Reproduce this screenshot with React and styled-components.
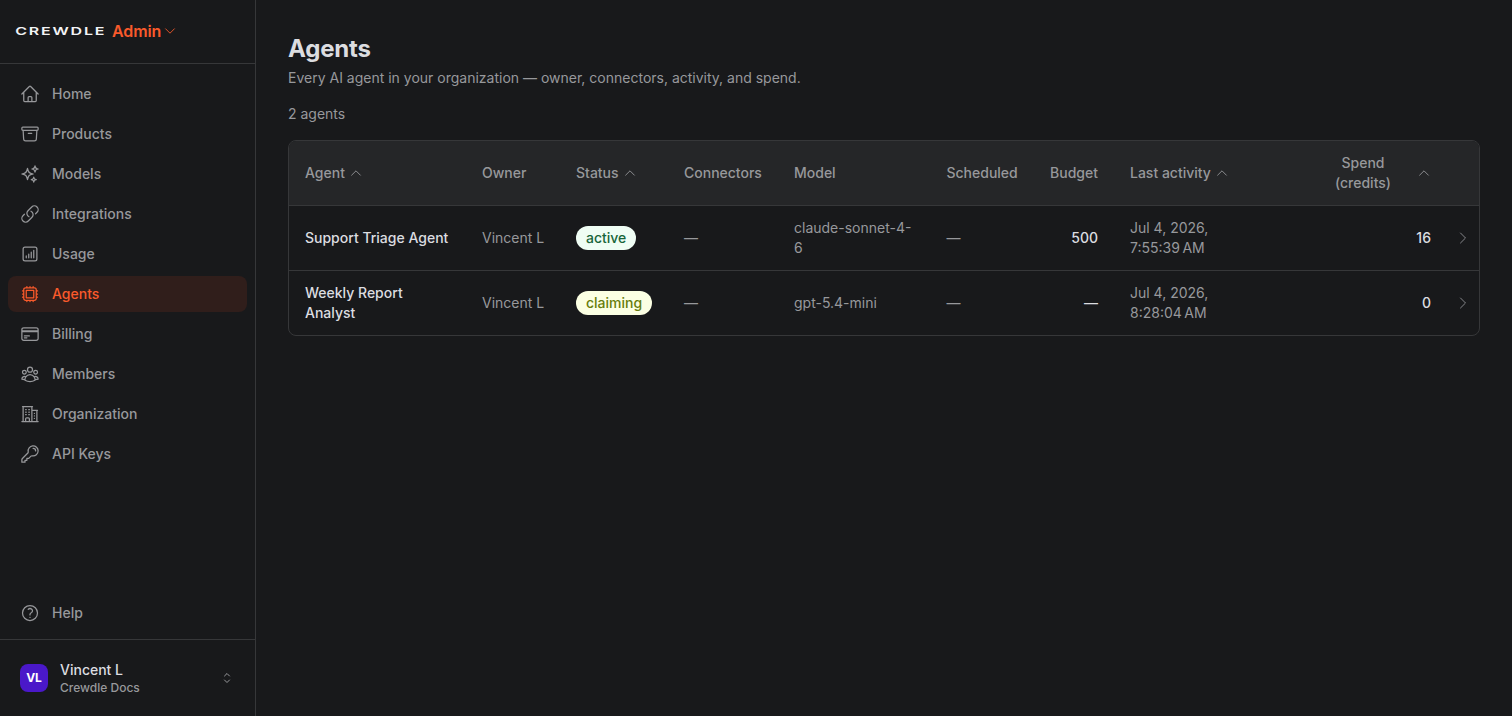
import React from 'react'
import styled, { createGlobalStyle, css } from 'styled-components'
import {
  HiOutlineHome,
  HiOutlineArchiveBox,
  HiOutlineSparkles,
  HiOutlineLink,
  HiOutlineChartBarSquare,
  HiOutlineCpuChip,
  HiOutlineCreditCard,
  HiOutlineUserGroup,
  HiOutlineBuildingOffice2,
  HiOutlineKey,
  HiOutlineQuestionMarkCircle,
  HiOutlineChevronDown,
  HiOutlineChevronUp,
  HiOutlineChevronRight,
  HiOutlineChevronUpDown,
} from 'react-icons/hi2'

const colors = {
  bg: '#18191b',
  headBg: '#252628',
  border: '#363739',
  text: '#dcdde0',
  muted: '#97989b',
  accent: '#f95a2b',
  activeBg: '#301e1b',
}

const GlobalStyle = createGlobalStyle`
  * {
    box-sizing: border-box;
  }

  body {
    margin: 0;
    background: ${colors.bg};
    color: ${colors.text};
    font-family: Inter, "Liberation Sans", sans-serif;
    font-size: 14px;
    line-height: 20px;
    -webkit-font-smoothing: antialiased;
  }
`

const Layout = styled.div`
  display: flex;
  height: 100vh;
  overflow: hidden;
`

const Sidebar = styled.aside`
  display: flex;
  flex-direction: column;
  flex: 0 0 256px;
  border-right: 1px solid ${colors.border};
`

const Brand = styled.div`
  display: flex;
  align-items: center;
  height: 64px;
  padding: 0 16px 2px;
  border-bottom: 1px solid ${colors.border};
`

const Wordmark = styled.svg`
  display: block;
  width: 88px;
  height: 8px;
  overflow: visible;

  text {
    fill: #f2f3f5;
    font-family: Inter, sans-serif;
    font-size: 10.6px;
    font-weight: 600;
    letter-spacing: 1.2px;
  }
`

const BrandArea = styled.span`
  display: flex;
  align-items: center;
  gap: 2px;
  margin-left: 8px;
  color: ${colors.accent};
  font-size: 16px;
  font-weight: 600;
  letter-spacing: -0.1px;
`

const Nav = styled.nav`
  display: flex;
  flex-direction: column;
  flex: ${props => (props.$grow ? 1 : 'none')};
  gap: 4px;
  padding: ${props => (props.$grow ? '12px 8px' : '8px')};
`

const NavItem = styled.a`
  display: flex;
  align-items: center;
  gap: 12px;
  height: 36px;
  padding: 0 12px;
  border-radius: 8px;
  color: ${colors.muted};
  font-weight: 500;

  ${props => props.$active && css`
    background: ${colors.activeBg};
    color: ${colors.accent};
  `}
`

const Account = styled.div`
  display: flex;
  align-items: center;
  gap: 12px;
  height: 77px;
  padding: 0 20px;
  border-top: 1px solid ${colors.border};
`

const Avatar = styled.div`
  display: flex;
  align-items: center;
  justify-content: center;
  width: 28px;
  height: 28px;
  border-radius: 8px;
  background: #4a18c9;
  color: #fff;
  font-size: 12px;
  font-weight: 700;
`

const AccountText = styled.div`
  flex: 1;
  font-weight: 500;

  small {
    display: block;
    color: ${colors.muted};
    font-size: 12px;
    line-height: 16px;
  }
`

const Main = styled.main`
  flex: 1;
  padding: 32px;
`

const Title = styled.h1`
  margin: 0;
  font-size: 24px;
  font-weight: 700;
  letter-spacing: -0.2px;
  line-height: 34px;
`

const Description = styled.p`
  margin: 2px 0 0;
  color: ${colors.muted};
`

const Count = styled.p`
  margin: 16px 0;
  color: ${colors.muted};
`

const TableWrap = styled.div`
  border: 1px solid ${colors.border};
  border-radius: 8px;
  overflow: hidden;
`

const Table = styled.table`
  width: 100%;
  table-layout: fixed;
  border-collapse: separate;
  border-spacing: 0;

  thead {
    background: ${colors.headBg};
  }

  tr:not(:last-child) td,
  th {
    border-bottom: 1px solid ${colors.border};
  }
`

const Col = styled.col`
  width: ${props => props.$width}px;
`

const HeadCell = styled.th`
  height: 65px;
  padding: 12px 16px;
  color: ${colors.muted};
  font-weight: 500;
  text-align: ${props => (props.$right ? 'right' : 'left')};
`

const SortButton = styled.span`
  display: flex;
  align-items: center;
  justify-content: ${props => (props.$right ? 'flex-end' : 'flex-start')};
  gap: 4px;
  text-align: center;

  svg {
    flex: none;
  }
`

const Cell = styled.td`
  height: 64px;
  padding: 12px 16px;
  color: ${props => (props.$strong ? colors.text : colors.muted)};
  font-weight: ${props => (props.$strong ? 500 : 400)};
  text-align: ${props => (props.$right ? 'right' : 'left')};
  white-space: ${props => (props.$nowrap ? 'nowrap' : 'normal')};
`

const ArrowCell = styled.td`
  padding: 0 8px;
  color: #85868a;

  svg {
    display: block;
  }
`

const Badge = styled.span`
  display: inline-block;
  padding: 2px 10px;
  border-radius: 12px;
  font-weight: 500;
  vertical-align: middle;
  background: ${props => (props.$status === 'active' ? '#effdf4' : '#fbffe3')};
  color: ${props => (props.$status === 'active' ? '#17653a' : '#677d0c')};
`

const navItems = [
  { label: 'Home', icon: HiOutlineHome },
  { label: 'Products', icon: HiOutlineArchiveBox },
  { label: 'Models', icon: HiOutlineSparkles },
  { label: 'Integrations', icon: HiOutlineLink },
  { label: 'Usage', icon: HiOutlineChartBarSquare },
  { label: 'Agents', icon: HiOutlineCpuChip },
  { label: 'Billing', icon: HiOutlineCreditCard },
  { label: 'Members', icon: HiOutlineUserGroup },
  { label: 'Organization', icon: HiOutlineBuildingOffice2 },
  { label: 'API Keys', icon: HiOutlineKey },
]

const columns = [
  { label: 'Agent', width: 177, sortable: true },
  { label: 'Owner', width: 94 },
  { label: 'Status', width: 108, sortable: true },
  { label: 'Connectors', width: 110 },
  { label: 'Model', width: 152.5 },
  { label: 'Scheduled', width: 103.5 },
  { label: 'Budget', width: 80, right: true },
  { label: 'Last activity', width: 183, sortable: true },
  { label: 'Spend (credits)', width: 150, sortable: true, right: true },
  { label: '', width: 32 },
]

const agents = [
  {
    name: 'Support Triage Agent',
    owner: 'Vincent L',
    status: 'active',
    connectors: '—',
    model: 'claude-sonnet-4-6',
    scheduled: '—',
    budget: '500',
    lastActivity: 'Jul 4, 2026, 7:55:39\u202fAM',
    spend: 16,
  },
  {
    name: 'Weekly Report Analyst',
    owner: 'Vincent L',
    status: 'claiming',
    connectors: '—',
    model: 'gpt-5.4-mini',
    scheduled: '—',
    budget: '—',
    lastActivity: 'Jul 4, 2026, 8:28:04\u202fAM',
    spend: 0,
  },
]

function SidebarMenu() {
  return (
    <Sidebar>
      <Brand>
        <Wordmark viewBox='0 0 88 8'>
          <text x='-0.8' y='8.4' textLength='91' lengthAdjust='spacingAndGlyphs'>CREWDLE</text>
        </Wordmark>
        <BrandArea>
          Admin
          <HiOutlineChevronDown size={14} />
        </BrandArea>
      </Brand>
      <Nav $grow>
        {navItems.map(({ label, icon: Icon }) =>
          <NavItem key={label} $active={label === 'Agents'}>
            <Icon size={20} />
            {label}
          </NavItem>
        )}
      </Nav>
      <Nav>
        <NavItem>
          <HiOutlineQuestionMarkCircle size={20} />
          Help
        </NavItem>
      </Nav>
      <Account>
        <Avatar>VL</Avatar>
        <AccountText>
          Vincent L
          <small>Crewdle Docs</small>
        </AccountText>
        <HiOutlineChevronUpDown size={16} color={colors.muted} />
      </Account>
    </Sidebar>
  )
}

function AgentsTable() {
  return (
    <TableWrap>
      <Table>
        <colgroup>
          {columns.map(col => <Col key={col.label} $width={col.width} />)}
        </colgroup>
        <thead>
          <tr>
            {columns.map(col =>
              <HeadCell key={col.label} $right={col.right}>
                {col.sortable
                  ? <SortButton $right={col.right}>
                      <span>{col.label}</span>
                      <HiOutlineChevronUp size={14} />
                    </SortButton>
                  : col.label}
              </HeadCell>
            )}
          </tr>
        </thead>
        <tbody>
          {agents.map(agent =>
            <tr key={agent.name}>
              <Cell $strong>{agent.name}</Cell>
              <Cell $nowrap>{agent.owner}</Cell>
              <Cell><Badge $status={agent.status}>{agent.status}</Badge></Cell>
              <Cell>{agent.connectors}</Cell>
              <Cell>{agent.model}</Cell>
              <Cell>{agent.scheduled}</Cell>
              <Cell $strong $right>{agent.budget}</Cell>
              <Cell>{agent.lastActivity}</Cell>
              <Cell $strong $right>{agent.spend}</Cell>
              <ArrowCell><HiOutlineChevronRight size={16} /></ArrowCell>
            </tr>
          )}
        </tbody>
      </Table>
    </TableWrap>
  )
}

export default function App() {
  return (
    <Layout>
      <GlobalStyle />
      <SidebarMenu />
      <Main>
        <Title>Agents</Title>
        <Description>Every AI agent in your organization — owner, connectors, activity, and spend.</Description>
        <Count>2 agents</Count>
        <AgentsTable />
      </Main>
    </Layout>
  )
}
